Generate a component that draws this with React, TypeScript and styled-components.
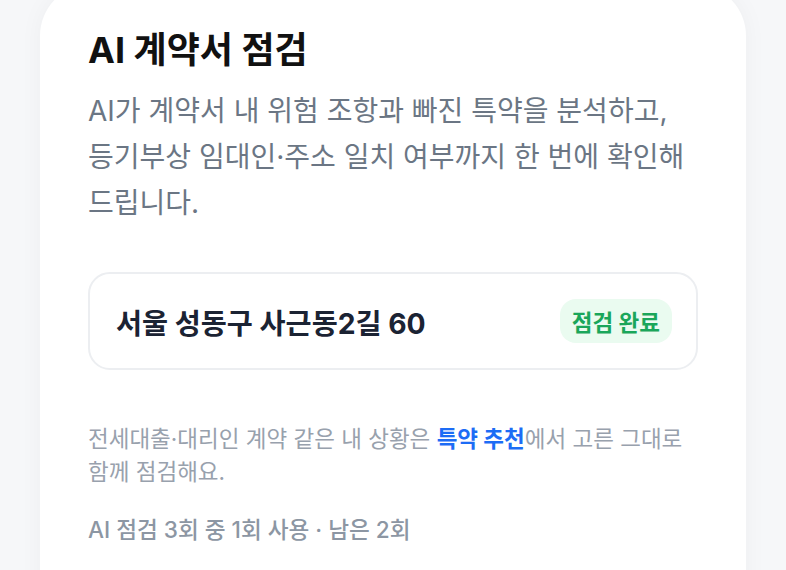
import styled, { createGlobalStyle } from 'styled-components';

const GlobalStyle = createGlobalStyle`
  html,
  body {
    margin: 0;
    padding: 0;
    background: #f6f7f9;
  }

  body {
    font-family: Inter, 'Noto Sans CJK KR', sans-serif;
    -webkit-font-smoothing: antialiased;
  }

  * {
    box-sizing: border-box;
  }
`;

const App = () => {
  return (
    <>
      <GlobalStyle />
      <Page>
        <Card>
          <Title>AI 계약서 점검</Title>
          <Description>
            AI가 계약서 내 위험 조항과 빠진 특약을 분석하고,
            <br />
            등기부상 임대인·주소 일치 여부까지 한 번에 확인해
            <br />
            드립니다.
          </Description>
          <AddressBox>
            <Address>서울 성동구 사근동2길 60</Address>
            <Badge>점검 완료</Badge>
          </AddressBox>
          <Note>
            전세대출·대리인 계약 같은 내 상황은 <Link>특약 추천</Link>에서 고른 그대로
            <br />
            함께 점검해요.
          </Note>
          <Usage>AI 점검 3회 중 1회 사용 · 남은 2회</Usage>
        </Card>
      </Page>
    </>
  );
};

const Page = styled.div`
  height: 570px;
  overflow: hidden;
  padding: 0 40px;
`;

const Card = styled.section`
  margin-top: -16px;
  padding: 48px 48px 80px;
  background: #ffffff;
  border-radius: 52px;
  box-shadow: 0 0 24px rgba(20, 30, 50, 0.04);
  display: flex;
  flex-direction: column;
`;

const Title = styled.h1`
  margin: 0;
  font-size: 36px;
  line-height: 36px;
  font-weight: 700;
  color: #111111;
`;

const Description = styled.p`
  margin: 20px 0 0;
  font-size: 28px;
  line-height: 46px;
  font-weight: 400;
  color: #6b7684;
`;

const AddressBox = styled.div`
  margin-top: 46px;
  height: 98px;
  padding: 0 24px 0 26px;
  border: 2px solid #eceef1;
  border-radius: 22px;
  display: flex;
  align-items: center;
  justify-content: space-between;
`;

const Address = styled.span`
  font-size: 28.3px;
  font-weight: 700;
  color: #1b2333;
`;

const Badge = styled.span`
  padding: 0 12px;
  height: 44px;
  display: inline-flex;
  align-items: center;
  border-radius: 16px;
  background: #eafbf0;
  color: #1aa65a;
  font-size: 22.5px;
  font-weight: 700;
`;

const Note = styled.p`
  margin: 52px 0 0;
  font-size: 22.5px;
  line-height: 33px;
  color: #98a1ad;
`;

const Link = styled.span`
  color: #1d6cf5;
  font-weight: 700;
  cursor: pointer;
`;

const Usage = styled.p`
  margin: 27px 0 0;
  font-size: 22.6px;
  line-height: 30px;
  font-weight: 500;
  color: #8c96a3;
`;

export default App;
